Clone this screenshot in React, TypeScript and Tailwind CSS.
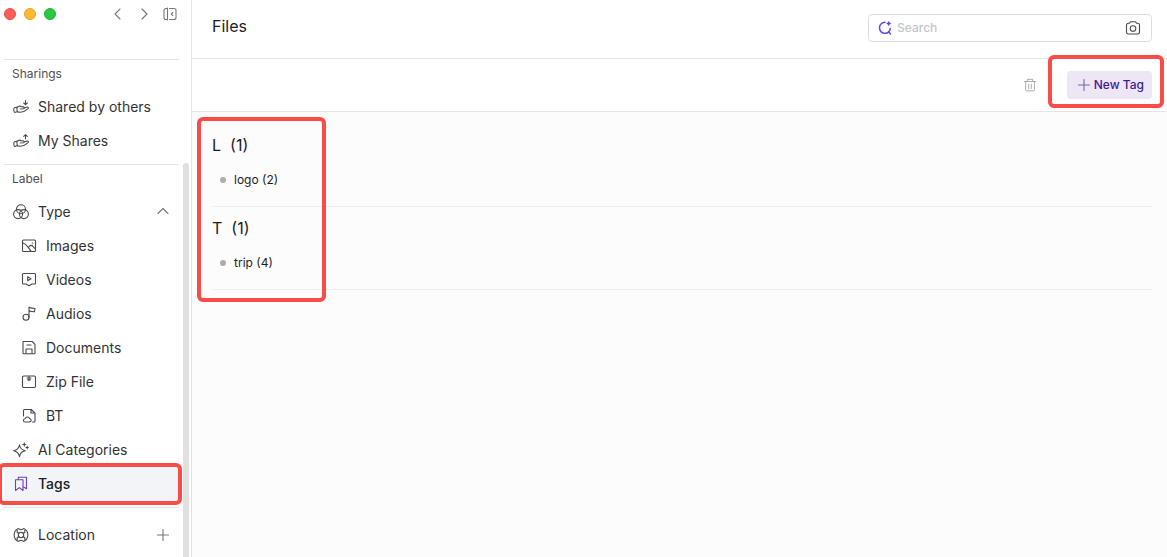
import type { ReactNode } from "react"

type IconProps = { children: ReactNode; className?: string }

function Icon({ children, className = "size-4" }: IconProps) {
  return (
    <svg
      xmlns="http://www.w3.org/2000/svg"
      viewBox="0 0 16 16"
      fill="none"
      stroke="currentColor"
      strokeWidth="1.1"
      strokeLinecap="round"
      strokeLinejoin="round"
      aria-hidden="true"
      className={`shrink-0 ${className}`}
    >
      {children}
    </svg>
  )
}

const hand = (
  <>
    <path d="M1.300 8.800 3.800 8.200 4.300 12.600 1.800 13.400C.8 13.300.4 9.800 1.300 8.800z" />
    <path d="M3.900 8.700C5.300 7 7 6.800 8.300 7.700l2 .2c1.300.2 1.100 1.800 0 1.900L7.300 10M11 9.200l2.800-1.100c1.600-.3 2 .9 1 1.800-2.500 2.300-5 3.300-7.500 3.300l-3-.3" />
  </>
)

const icons = {
  received: <>{hand}<path d="M12.500 1.500v4M10.700 4l1.800 1.700L14.300 4" /></>,
  sent: <>{hand}<path d="M12.500 5.800v-4M10.700 3.300l1.800-1.700 1.800 1.700" /></>,
  type: (
    <>
      <circle cx="8" cy="5.300" r="4.500" />
      <circle cx="5.100" cy="10.100" r="4.500" />
      <circle cx="10.900" cy="10.100" r="4.500" />
    </>
  ),
  image: (
    <>
      <rect x="1.500" y="2" width="13" height="11.500" rx="1" />
      <path d="M1.800 5c3.200.3 5.500 4.700 8.200 8.200M7.500 9.500c1.500-2.800 3.500-2.600 4.600-1 .7 1.300 1.400 1.900 2.400 2M11.300 5h.5" />
    </>
  ),
  video: (
    <>
      <path d="M2.500 1.500h11a1 1 0 0 1 1 1V11a1 1 0 0 1-1 1H11l-3 1.700L5 12H2.500a1 1 0 0 1-1-1V2.500a1 1 0 0 1 1-1z" />
      <path d="M6.700 4.700v4L10 6.700z" />
    </>
  ),
  audio: (
    <>
      <circle cx="5" cy="11.300" r="3" />
      <path d="M8 11.300V1.300c1.600 1 3.600 1.200 6 1.200l-.6 3.300C11.400 5.800 9.500 5.400 8 4.500" />
    </>
  ),
  document: (
    <>
      <path d="M2.500 1.500h8.700L14 4.300v8.700a.7.7 0 0 1-.7.700H2.700a.7.700 0 0 1-.7-.7V2a.5.500 0 0 1 .5-.5z" />
      <path d="M5 13.500V9h6v4.500M6 5h4" />
    </>
  ),
  zip: (
    <>
      <rect x="1.500" y="2" width="13" height="11.500" rx="1.200" />
      <path d="M8 2.200v4.500M6 4h4M6.500 5.800h3" />
    </>
  ),
  bt: (
    <>
      <path d="M2.500 8V2.500a1 1 0 0 1 1-1h6.800L14 5.200V13a1 1 0 0 1-1 1h-1.500M10 1.700V5h3.800" />
      <path d="M4.300 14h4c2.600-.2 2.300-3.300.2-3.500-.7-2.200-4-2-4.300.300-2.600.2-2.300 3.100.1 3.200z" />
    </>
  ),
  sparkle: (
    <>
      <path d="M6.500 2.800C7 6.500 8.500 8 12.200 8.800 8.500 9.500 7 11 6.500 14.700 5.800 11 4.300 9.500.7 8.800 4.300 8 5.800 6.500 6.500 2.800z" />
      <path d="M11.300.9v3.200M9.700 2.500h3.200M14.200 4.300v2.400M13 5.500h2.400" />
    </>
  ),
  tags: (
    <>
      <path d="M2.500 3.700h7.500v10.800L6.300 11.600l-3.800 2.900z" />
      <path d="M5.300 3.500V1.300h8.200v11.500L10.500 11" />
    </>
  ),
  location: (
    <>
      <circle cx="8" cy="8" r="2.700" />
      <path d="M4.200 3.200v2.300l1.900.8M11.800 3.200v2.300l-1.900.8M4.200 12.800v-2.300l1.900-.8M11.800 12.800v-2.300l-1.900-.8M5.300 1.600C-.2 4-.2 12 5.300 14.400M10.700 1.600c5.500 2.400 5.500 10.400 0 12.800M5.500 1.700l2.500 1 2.500-1M5.500 14.300l2.500-1 2.500 1" />
    </>
  ),
}

const sharings = [
  { name: "Shared by others", icon: icons.received },
  { name: "My Shares", icon: icons.sent },
]

const types = [
  { name: "Images", icon: icons.image },
  { name: "Videos", icon: icons.video },
  { name: "Audios", icon: icons.audio },
  { name: "Documents", icon: icons.document },
  { name: "Zip File", icon: icons.zip },
  { name: "BT", icon: icons.bt },
]

const tagGroups = [
  { letter: "L", tags: [{ name: "logo", count: 2 }] },
  { letter: "T", tags: [{ name: "trip", count: 4 }] },
]

function NavItem({ name, icon, nested }: { name: string; icon: ReactNode; nested?: boolean }) {
  return (
    <a
      href="#"
      className={`flex h-[34px] shrink-0 items-center gap-[9px] text-sm text-[#333335] ${nested ? "pl-[21px]" : "pl-[13px]"}`}
    >
      <Icon className="size-4 text-[#4a4a4c]">{icon}</Icon>
      {name}
    </a>
  )
}

function NavHeading({ children }: { children: ReactNode }) {
  return <h2 className="mb-[2px] flex h-7 shrink-0 items-center pl-3 text-xs text-[#505052]">{children}</h2>
}

function Highlight({ className }: { className: string }) {
  return <div className={`pointer-events-none absolute z-10 rounded-md border-4 border-[#f94b48] ${className}`} />
}

function Sidebar() {
  return (
    <aside className="flex w-48 shrink-0 flex-col border-r border-[#e5e5e7] bg-white">
      <div className="flex h-[59px] shrink-0 items-start justify-between pt-[6px] pr-[13px] pl-1">
        <div className="flex h-4 items-center gap-2">
          <span className="size-3 rounded-full border border-[#e2504a] bg-[#ff5f57]" />
          <span className="size-3 rounded-full border border-[#e0a32e] bg-[#febc2e]" />
          <span className="size-3 rounded-full border border-[#24ae38] bg-[#28c840]" />
        </div>
        <div className="flex items-center gap-[10px] text-[#77777a]">
          <button type="button" aria-label="Back">
            <Icon><path d="M10 3 5 8l5 5" /></Icon>
          </button>
          <button type="button" aria-label="Forward">
            <Icon><path d="m6 3 5 5-5 5" /></Icon>
          </button>
          <button type="button" aria-label="Collapse sidebar">
            <Icon>
              <path d="M5 2.500H4a2 2 0 0 0-2 2v7a2 2 0 0 0 2 2h1M7.500 2.500H12a2 2 0 0 1 2 2v7a2 2 0 0 1-2 2H7.500M5.500 2v12M10.800 6.500 9.300 8l1.500 1.500" />
            </Icon>
          </button>
        </div>
      </div>

      <nav className="flex min-h-0 flex-1 flex-col">
        <div className="mr-3 ml-1 border-t border-[#e5e5e5]" />
        <NavHeading>Sharings</NavHeading>
        {sharings.map((item) => (
          <NavItem key={item.name} {...item} />
        ))}

        <div className="mt-[5px] flex min-h-0 flex-1 overflow-hidden">
          <div className="flex min-w-0 flex-1 flex-col pt-px">
            <div className="mr-1 ml-1 shrink-0 border-t border-[#e5e5e5]" />
            <NavHeading>Label</NavHeading>
            <button
              type="button"
              className="flex h-[34px] shrink-0 items-center gap-[9px] pr-3 pl-[13px] text-sm text-[#333335]"
            >
              <Icon className="size-4 text-[#4a4a4c]">{icons.type}</Icon>
              Type
              <Icon className="ml-auto size-4 text-[#77777a]"><path d="m3 9.500 5-5 5 5" /></Icon>
            </button>
            {types.map((item) => (
              <NavItem key={item.name} {...item} nested />
            ))}
            <NavItem name="AI Categories" icon={icons.sparkle} />
            <a
              href="#"
              className="relative mr-1 ml-1 flex h-[34px] shrink-0 items-center gap-[9px] rounded bg-[#f2f4f7] pl-[9px] text-sm font-medium text-[#1d1d1f]"
            >
              <Icon className="size-4 text-[#6b3fb5]">{icons.tags}</Icon>
              Tags
              <Highlight className="-top-1 -right-[3px] -bottom-1 -left-[6px]" />
            </a>
            <div className="mt-[6px] mr-1 mb-[10px] ml-1 shrink-0 border-t border-[#e5e5e5]" />
            <div className="flex h-[34px] shrink-0 items-center pr-3">
              <NavItem name="Location" icon={icons.location} />
              <button type="button" aria-label="Add location" className="ml-auto text-[#77777a]">
                <Icon><path d="M8 2.500v11M2.500 8h11" /></Icon>
              </button>
            </div>
          </div>
          <div className="mr-[2px] w-[6px] shrink-0 rounded-t-full bg-[#e0e0e0]" />
        </div>
      </nav>
    </aside>
  )
}

function SearchBox() {
  return (
    <div className="flex h-7 w-[284px] items-center rounded border border-[#dcdae3] bg-white px-2">
      <Icon className="size-4 text-[#5b45f5]">
        <path
          d="M8 2.300a5.500 5.500 0 1 0 3.800 9.400 5.500 5.500 0 0 0 1.500-3.200M11.600 11.600l1.900 2.400M11.700 2v3M10.200 3.500h3"
          strokeWidth="1.500"
        />
      </Icon>
      <input
        type="text"
        aria-label="Search"
        placeholder="Search"
        className="ml-1 min-w-0 flex-1 text-xs outline-none placeholder:font-medium placeholder:text-[#c3c5cc]"
      />
      <button type="button" aria-label="Search by image" className="mr-[2px] text-[#4a4a4c]">
        <Icon>
          <path d="M5.500 1.800h5l1 1.500h1.300a1.700 1.700 0 0 1 1.700 1.700v7.300a1.700 1.700 0 0 1-1.700 1.700H3.200a1.700 1.700 0 0 1-1.700-1.700V5a1.700 1.700 0 0 1 1.700-1.700h1.300z" />
          <circle cx="8" cy="8.500" r="2.800" />
        </Icon>
      </button>
    </div>
  )
}

export default function App() {
  return (
    <div className="flex h-screen overflow-hidden bg-[#fcfcfc] font-['Inter','Liberation_Sans',sans-serif] text-[#1d1d1f]">
      <Sidebar />
      <main className="flex min-w-0 flex-1 flex-col">
        <header className="flex h-[59px] shrink-0 items-start justify-between border-b border-[#e5e5e7] bg-white pt-[14px] pr-[15px] pl-5">
          <h1 className="text-base">Files</h1>
          <SearchBox />
        </header>

        <div className="flex h-[53px] shrink-0 items-center justify-end gap-[30px] border-b border-[#e5e5e7] bg-white pr-[15px]">
          <button type="button" aria-label="Delete" disabled className="text-[#a9a9ac]">
            <Icon className="size-[14px]">
              <path d="M1.500 4h13M5 3.800V1.500h6v2.300M3 4.200v9a1.500 1.500 0 0 0 1.500 1.500h7a1.500 1.500 0 0 0 1.500-1.500v-9M6.500 7v5M9.500 7v5" />
            </Icon>
          </button>
          <div className="relative">
            <button
              type="button"
              className="flex h-7 items-center gap-[2px] rounded bg-[#ece6f5] pr-2 pl-[9px] text-xs font-medium text-[#3f1a91]"
            >
              <Icon className="size-4 text-[#7a62b3]"><path d="M8 2.500v11M2.500 8h11" /></Icon>
              New Tag
            </button>
            <Highlight className="-top-4 -right-3 -bottom-[9px] -left-[19px]" />
          </div>
        </div>

        <div className="relative pt-3 pr-[15px] pl-5">
          {tagGroups.map((group) => (
            <section key={group.letter} className="border-b border-[#efefef] pt-2 pb-4">
              <h2 className="flex h-[26px] items-center gap-[9px] text-base">
                <span>{group.letter}</span>
                <span>({group.tags.length})</span>
              </h2>
              <ul className="mt-3">
                {group.tags.map((tag) => (
                  <li key={tag.name} className="flex h-5 items-center gap-2 pl-2 text-xs">
                    <span className="size-[6px] rounded-full bg-[#adadad]" />
                    <a href="#">{tag.name} ({tag.count})</a>
                  </li>
                ))}
              </ul>
            </section>
          ))}
          <Highlight className="top-[5px] -bottom-3 left-[5px] w-[129px]" />
        </div>
      </main>
    </div>
  )
}
